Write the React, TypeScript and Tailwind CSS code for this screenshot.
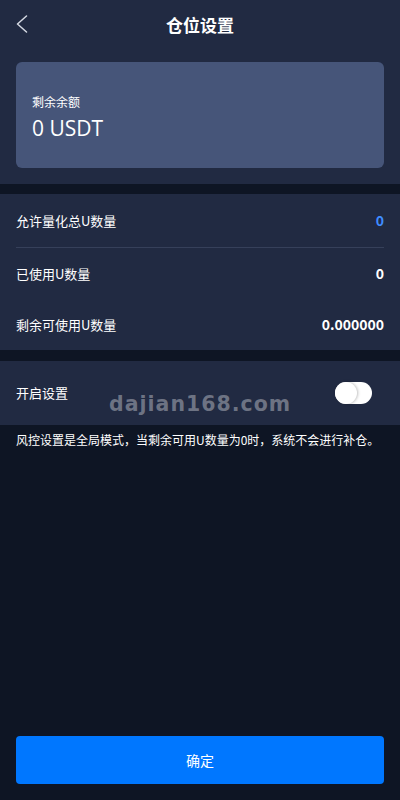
import React from "react";

export default function App() {
  const font = { fontFamily: '"Noto Sans CJK SC", "Microsoft YaHei", sans-serif' };
  return (
    <div className="w-[400px] h-[800px] bg-[#0e1524] flex flex-col text-white" style={font}>
      <div className="bg-[#212a42] pb-4">
        <div className="relative h-[48px] flex items-center justify-center">
          <button className="absolute left-[16px] top-[15px] w-[12px] h-[18px] flex items-center justify-center">
            <svg width="12" height="18" viewBox="0 0 12 18" fill="none">
              <path d="M10.5 1L1.5 9L10.5 17" stroke="#d6dae3" strokeWidth="1.5" strokeLinecap="round" strokeLinejoin="round" />
            </svg>
          </button>
          <h1 className="text-[17px] font-bold leading-none">仓位设置</h1>
        </div>
        <div className="mx-4 mt-[14px] h-[106px] rounded-md bg-[#465579] px-4 flex flex-col justify-center">
          <div className="text-[12px] leading-none mt-[4px]">剩余余额</div>
          <div className="text-[21px] leading-none mt-[10px]" style={{ fontFamily: '"Open Sans", "Noto Sans", sans-serif' }}>0 USDT</div>
        </div>
      </div>
      <div className="h-[10px]" />
      <div className="bg-[#212a42] px-4">
        <div className="h-[54px] flex items-center justify-between border-b border-[#36405a]">
          <span className="text-[13px]">允许量化总U数量</span>
          <span className="text-[14px] font-bold text-[#3f8cff]">0</span>
        </div>
        <div className="h-[51px] flex items-center justify-between">
          <span className="text-[13px]">已使用U数量</span>
          <span className="text-[14px] font-bold">0</span>
        </div>
        <div className="h-[51px] flex items-center justify-between">
          <span className="text-[13px]">剩余可使用U数量</span>
          <span className="text-[14px] font-bold">0.000000</span>
        </div>
      </div>
      <div className="h-[11px]" />
      <div className="relative bg-[#212a42] h-[64px] px-4 flex items-center justify-between">
        <span className="text-[13px]">开启设置</span>
        <div className="relative w-[37px] h-[22px] rounded-full bg-white mr-[12px]">
          <div className="absolute left-0 top-0 w-[22px] h-[22px] rounded-full bg-white shadow-[1px_0_3px_rgba(0,0,0,0.25)]" />
        </div>
        <div
          className="absolute left-[109px] top-[28px] text-[20.5px] font-bold tracking-[1px] text-[#7c8190]/85 pointer-events-none"
          style={{ fontFamily: '"DejaVu Sans", sans-serif' }}
        >
          dajian168.com
        </div>
      </div>
      <div className="px-4 pt-[7px] text-[12px] leading-[16px] text-white">
        风控设置是全局模式，当剩余可用U数量为0时，系统不会进行补仓。
      </div>
      <div className="flex-1" />
      <div className="px-4 pb-4">
        <button className="w-full h-[48px] rounded-[4px] bg-[#0077ff] text-[14px] text-white flex items-center justify-center">
          确定
        </button>
      </div>
    </div>
  );
}
